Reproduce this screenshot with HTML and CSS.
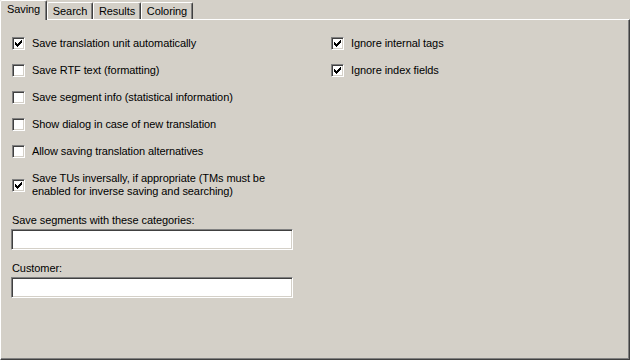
FILE: index.html
```html
<!DOCTYPE html>
<html>
<head>
<meta charset="utf-8">
<link rel="stylesheet" href="styles.css">
</head>
<body>
<div class="tabctl">
  <div class="tabs">
    <div class="tab sel t-saving">Saving</div>
    <div class="tab t-search">Search</div>
    <div class="tab t-results">Results</div>
    <div class="tab t-coloring">Coloring</div>
  </div>
  <div class="panel">
    <div class="col left">
      <div class="row"><span class="cb on"><svg width="7" height="7" viewBox="0 0 7 7"><path d="M0 2h1v3h-1zM1 3h1v3h-1zM2 4h1v3h-1zM3 3h1v3h-1zM4 2h1v3h-1zM5 1h1v3h-1zM6 0h1v3h-1z"/></svg></span><span class="lbl">Save translation unit automatically</span></div>
      <div class="row"><span class="cb"></span><span class="lbl">Save RTF text (formatting)</span></div>
      <div class="row"><span class="cb"></span><span class="lbl">Save segment info (statistical information)</span></div>
      <div class="row"><span class="cb"></span><span class="lbl">Show dialog in case of new translation</span></div>
      <div class="row"><span class="cb"></span><span class="lbl">Allow saving translation alternatives</span></div>
      <div class="row multi"><span class="cb on"><svg width="7" height="7" viewBox="0 0 7 7"><path d="M0 2h1v3h-1zM1 3h1v3h-1zM2 4h1v3h-1zM3 3h1v3h-1zM4 2h1v3h-1zM5 1h1v3h-1zM6 0h1v3h-1z"/></svg></span><span class="lbl">Save TUs inversally, if appropriate (TMs must be<br>enabled for inverse saving and searching)</span></div>
      <div class="field first">
        <div class="flabel">Save segments with these categories:</div>
        <div class="input"></div>
      </div>
      <div class="field">
        <div class="flabel">Customer:</div>
        <div class="input"></div>
      </div>
    </div>
    <div class="col right">
      <div class="row"><span class="cb on"><svg width="7" height="7" viewBox="0 0 7 7"><path d="M0 2h1v3h-1zM1 3h1v3h-1zM2 4h1v3h-1zM3 3h1v3h-1zM4 2h1v3h-1zM5 1h1v3h-1zM6 0h1v3h-1z"/></svg></span><span class="lbl">Ignore internal tags</span></div>
      <div class="row"><span class="cb on"><svg width="7" height="7" viewBox="0 0 7 7"><path d="M0 2h1v3h-1zM1 3h1v3h-1zM2 4h1v3h-1zM3 3h1v3h-1zM4 2h1v3h-1zM5 1h1v3h-1zM6 0h1v3h-1z"/></svg></span><span class="lbl">Ignore index fields</span></div>
    </div>
  </div>
</div>
</body>
</html>
```
FILE: styles.css
```css
* { box-sizing: border-box; }
html, body {
  margin: 0;
  padding: 0;
  background: #d4d0c8;
}
body {
  font-family: "Liberation Sans", Arial, sans-serif;
  font-size: 11px;
  line-height: 13px;
  letter-spacing: -0.08px;
  color: #000;
}
.tabctl {
  width: 630px;
  height: 360px;
  display: flex;
  flex-direction: column;
}
.tabs {
  display: flex;
  align-items: flex-end;
  height: 19px;
  position: relative;
  z-index: 1;
}
.tab {
  height: 17px;
  padding-top: 2px;
  text-align: center;
  background: #d4d0c8;
  border-left: 1px solid #fff;
  border-top: 1px solid #fff;
  border-right: 1px solid #404040;
  border-radius: 2px 2px 0 0;
  box-shadow: inset -1px 0 #808080;
  white-space: nowrap;
}
.tab.sel {
  height: 20px;
  margin-bottom: -1px;
  padding-top: 2px;
}
.t-saving { width: 47px; }
.t-search { width: 46px; }
.t-results { width: 48px; }
.t-coloring { width: 52px; }
.panel {
  flex: 1;
  display: flex;
  border-top: 1px solid #fff;
  border-left: 1px solid #fff;
  border-right: 1px solid #404040;
  border-bottom: 1px solid #404040;
  box-shadow: inset -1px -1px #808080;
  padding-top: 17px;
}
.col {
  display: flex;
  flex-direction: column;
  gap: 14px;
}
.col.left {
  width: 330px;
  padding-left: 10px;
}
.row {
  display: flex;
  align-items: center;
  min-height: 13px;
}
.left .row .cb { margin-left: 1px; }
.cb {
  flex: none;
  width: 13px;
  height: 13px;
  background: #fff;
  border: 1px solid;
  border-color: #808080 #fff #fff #808080;
  box-shadow: inset 1px 1px #404040, inset -1px -1px #d4d0c8;
  display: flex;
  align-items: center;
  justify-content: center;
}
.cb svg {
  display: block;
  fill: #000;
  shape-rendering: crispEdges;
}
.lbl {
  margin-left: 7px;
  white-space: nowrap;
}
.field.first { margin-top: 2px; }
.field + .field { margin-top: -2px; }
.flabel {
  margin-left: 1px;
  margin-bottom: 2px;
}
.input {
  width: 282px;
  height: 21px;
  background: #fff;
  border: 1px solid;
  border-color: #808080 #fff #fff #808080;
  box-shadow: inset 1px 1px #404040, inset -1px -1px #d4d0c8;
}
```
